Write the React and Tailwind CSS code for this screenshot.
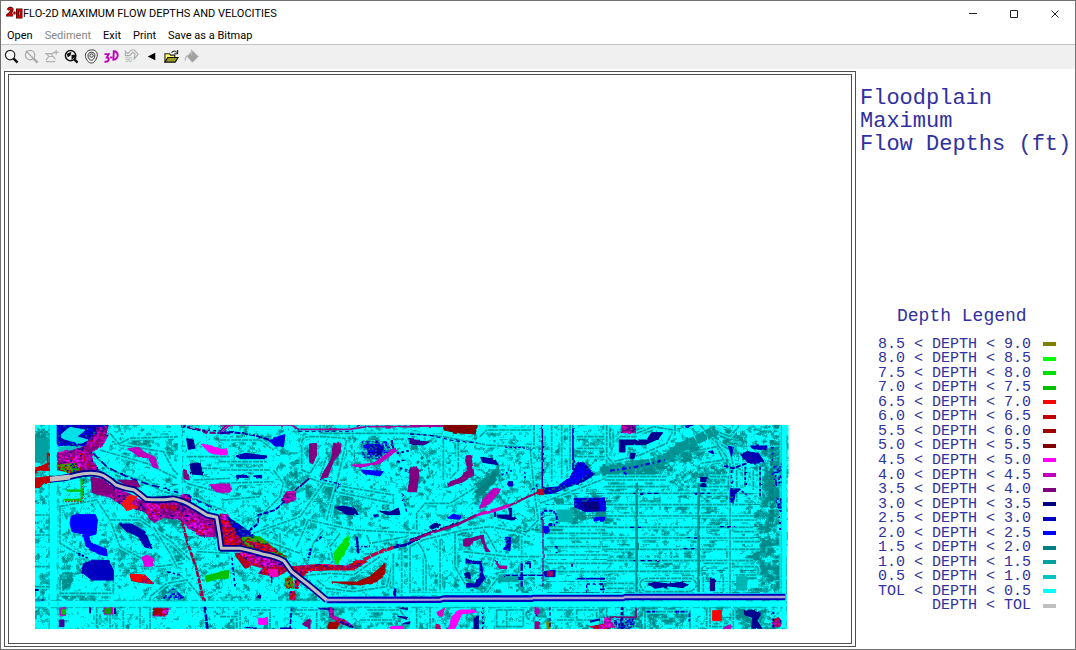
import { useMemo } from 'react'

const MENU = ['Open', 'Sediment', 'Exit', 'Print', 'Save as a Bitmap']

const LEGEND = [
  ['8.5 < DEPTH < 9.0', '#808000'],
  ['8.0 < DEPTH < 8.5', '#00ff00'],
  ['7.5 < DEPTH < 8.0', '#00e000'],
  ['7.0 < DEPTH < 7.5', '#00c000'],
  ['6.5 < DEPTH < 7.0', '#ff0000'],
  ['6.0 < DEPTH < 6.5', '#c00000'],
  ['5.5 < DEPTH < 6.0', '#a00000'],
  ['5.0 < DEPTH < 5.5', '#800000'],
  ['4.5 < DEPTH < 5.0', '#ff00ff'],
  ['4.0 < DEPTH < 4.5', '#c000c0'],
  ['3.5 < DEPTH < 4.0', '#800080'],
  ['3.0 < DEPTH < 3.5', '#000080'],
  ['2.5 < DEPTH < 3.0', '#0000c0'],
  ['2.0 < DEPTH < 2.5', '#0000ff'],
  ['1.5 < DEPTH < 2.0', '#008080'],
  ['1.0 < DEPTH < 1.5', '#00a0a0'],
  ['0.5 < DEPTH < 1.0', '#00c4c4'],
  ['TOL < DEPTH < 0.5', '#00ffff'],
  ['DEPTH < TOL', '#c0c0c0'],
]

// ---------- terrain noise ----------

function hash(x, y) {
  let h = (x * 374761393 + y * 668265263) | 0
  h = Math.imul(h ^ (h >>> 13), 1274126177)
  return ((h ^ (h >>> 16)) >>> 0) / 4294967296
}

function noise(x, y) {
  const xi = Math.floor(x)
  const yi = Math.floor(y)
  const u = (x - xi) * (x - xi) * (3 - 2 * (x - xi))
  const v = (y - yi) * (y - yi) * (3 - 2 * (y - yi))
  const top = hash(xi, yi) * (1 - u) + hash(xi + 1, yi) * u
  const bottom = hash(xi, yi + 1) * (1 - u) + hash(xi + 1, yi + 1) * u
  return top * (1 - v) + bottom * v
}

// x, y, rx, ry, extra depth (cells)
const WET = [
  [5, 22, 12, 18, 0.3], [30, 155, 8, 22, 0.3], [45, 172, 18, 6, 0.26],
  [140, 25, 12, 8, 0.15], [135, 170, 16, 12, 0.18], [260, 58, 16, 12, 0.18],
  [340, 25, 20, 16, 0.26], [300, 70, 22, 14, 0.14], [450, 60, 18, 20, 0.18],
  [540, 92, 12, 8, 0.28], [570, 92, 14, 8, 0.16], [600, 45, 42, 10, 0.3],
  [650, 28, 24, 12, 0.28], [690, 14, 22, 12, 0.26], [675, 48, 22, 10, 0.14],
  [738, 30, 14, 44, 0.24], [735, 90, 18, 44, 0.24], [730, 150, 28, 30, 0.22],
  [715, 190, 24, 14, 0.2], [620, 190, 34, 16, 0.16], [500, 190, 26, 12, 0.14],
  [80, 195, 24, 8, 0.16], [300, 30, 10, 16, 0.1], [445, 160, 14, 8, 0.18],
  [555, 22, 16, 20, 0.16], [620, 98, 110, 50, 0.05], [280, 78, 44, 30, 0.07],
  [60, 115, 40, 30, 0.05], [120, 120, 50, 40, 0.05],
]

const TEALS = ['#00cccc', '#00a8a8', '#008c8c']

function depthClass(x, y) {
  let v = 0.38 * noise(x / 7, y / 7) + 0.46 * noise(x / 2.8 + 90, y / 2.4) + 0.16 * hash(x + 7, y + 3)
  const ridge = Math.abs(noise(x / 13 + 40, y / 11) - 0.5)
  if (ridge < 0.03) v += 0.1
  WET.forEach(([cx, cy, rx, ry, d]) => {
    const k = ((x - cx) / rx) ** 2 + ((y - cy) / ry) ** 2
    if (k < 1) v += d * (1 - k * k)
  })
  // street grid of the eastern subdivision
  if (x > 510 && x < 725 && y > 60 && y < 172) {
    const row = y % 11
    if (row === 3) v += 0.18
    else if (row === 4 || row === 2 || row === 9) v -= 0.08
    else if (row === 6) v += 0.05
  }
  if (v > 0.76) return 2
  if (v > 0.66) return 1
  if (v > 0.56) return 0
  return -1
}

function buildTerrain() {
  const paths = ['', '', '']
  for (let y = 0; y < 206; y++) {
    let start = 0
    let current = depthClass(0, y)
    for (let x = 1; x <= 754; x++) {
      const next = x === 754 ? -2 : depthClass(x, y)
      if (next !== current) {
        if (current >= 0) paths[current] += `M${start} ${y}h${x - start}v1h${start - x}z`
        start = x
        current = next
      }
    }
  }
  return paths
}

// speckled fills, [base, ...[colour, share]]
const MIXES = {
  plum: ['#800080', ['#c000c0', 0.24], ['#e000c0', 0.06], ['#b00020', 0.06], ['#200090', 0.06]],
  rose: ['#c000c0', ['#800080', 0.24], ['#ff00ff', 0.16], ['#c00000', 0.16], ['#0000a0', 0.06]],
  brick: ['#b00018', ['#ff0000', 0.2], ['#900060', 0.18], ['#e000a0', 0.12], ['#200090', 0.08]],
  navy: ['#0000c0', ['#000090', 0.25], ['#0000ff', 0.2], ['#006090', 0.1]],
  shoal: ['#00a0a0', ['#0000c0', 0.3], ['#0000ff', 0.12], ['#00e8e8', 0.2]],
  moss: ['#00b000', ['#808000', 0.24], ['#c00000', 0.2], ['#0000c0', 0.1]],
}

function MixPattern({ id, mix, seed }) {
  const [base, ...rest] = mix
  const cells = []
  for (let y = 0; y < 24; y++) {
    for (let x = 0; x < 24; x++) {
      let r = hash(x * 3 + seed, y * 5 + seed * 7)
      for (const [color, share] of rest) {
        if (r < share) {
          cells.push(<rect key={`${x}-${y}`} x={x * 5} y={y * 5} width="6" height="5" fill={color} />)
          break
        }
        r -= share
      }
    }
  }
  return (
    <pattern id={id} width="120" height="120" patternUnits="userSpaceOnUse">
      <rect width="120" height="120" fill={base} />
      {cells}
    </pattern>
  )
}

// ---------- map features, four sheets from west to east ----------
// streets: [path]   fills: [path, colour]   lines: [path, colour, width, dash]

const SHEETS = [
  {
    streets: [
      'M200 60 L180 95 L240 150 L330 180 L400 215 L500 240 L590 275',
      'M240 40 L270 75 L400 95 L430 150 L470 190 L600 225',
      'M270 70 L300 55 L450 50', 'M210 90 L350 130 L440 175',
      'M85 260 L200 240 L240 300 L270 380 L380 440 L460 430',
      'M14 285 H60 M14 345 H60 M14 440 H60 M14 500 H60', 'M90 260 V370 L160 410',
      'M240 300 L330 300 L430 370 L480 420', 'M370 320 L420 400 L440 440', 'M90 480 V520 H250 V450',
      'M360 628 V530 L410 490 L470 480 L520 540', 'M500 395 L600 400', 'M200 560 V620 M240 560 V628 M280 570 V628 M330 560 V628',
      'M470 110 H600 M480 145 H600 M490 180 L600 175',
    ],
    fills: [
      ['M80 14 H235 L225 50 L195 55 L150 95 L120 75 L80 78Z', 'navy'],
      ['M95 42 L120 22 L165 30 L140 50 L175 60 L150 70 L95 55Z', '#00e0e8'],
      ['M88 82 L150 78 L170 92 L140 100 L85 98Z', '#00c4c4'],
      ['M82 98 L125 92 L165 80 L190 45 L235 45 L215 80 L185 95 L190 120 L205 150 L165 158 L120 150 L82 150Z', 'plum'],
      ['M100 105 L160 100 L175 140 L120 145Z', 'rose'],
      ['M200 25 L232 18 L222 70 L205 75Z', 'plum'],
      ['M80 135 L140 130 L150 158 L115 158 L84 148Z', 'moss'],
      ['M14 55 H56 V110 L40 130 L14 125Z', '#00a0a0'],
      ['M14 148 L52 130 V100 H58 V152 L30 150 L14 156Z', '#c00000'],
      ['M14 175 L60 169 L62 187 L42 188 L28 203 L14 203Z', '#c00000'],
      ['M183 172 L215 178 L255 205 L300 222 L345 248 L400 250 L450 245 L500 268 L560 300 L555 350 L510 348 L470 318 L452 300 L400 292 L372 308 L345 275 L280 258 L240 232 L187 218Z', 'plum'],
      ['M183 172 L215 178 L250 203 L240 225 L187 214Z', '#800080'],
      ['M265 180 L320 182 L330 200 L300 205Z', '#800080'],
      ['M275 250 L300 226 L322 230 L300 250 L325 262 L290 272Z', '#f01818'],
      ['M345 248 L380 252 L395 268 L390 300 L360 290Z', 'rose'],
      ['M470 285 L545 315 L548 346 L510 342 L478 318Z', 'rose'],
      ['M455 222 L480 225 L482 245 L450 240Z', 'rose'],
      ['M575 290 L600 295 V382 H582Z', 'brick'],
      ['M295 86 L325 82 L345 98 L375 112 L385 145 L370 142 L355 115 L320 105Z', '#c000c0'],
      ['M513 72 L545 78 L592 95 V105 L540 100Z', '#ff00ff'],
      ['M535 194 L600 192 V216 L560 216Z', '#c000c0'],
      ['M480 132 L510 128 L518 165 L485 162Z', '#000090'],
      ['M470 56 L490 60 L494 85 L475 88Z', '#000090'],
      ['M458 148 L472 152 L478 180 L462 176Z', '#800080'],
      ['M124 288 L140 284 H196 L202 300 L198 342 L176 348 L182 368 L228 388 L232 408 L205 402 L168 378 L160 342 L126 335 L120 310Z', '#0000ff'],
      ['M160 432 L185 420 L235 422 L250 450 V480 H185 L155 456Z', '#0000c0'],
      ['M268 312 L305 312 L345 335 L366 385 L345 382 L325 350 L285 330Z', '#0000b0'],
      ['M335 412 L352 405 L372 418 L368 438 L345 440Z', '#e000e0'],
      ['M300 464 L345 465 L372 492 L340 488 L305 482Z', 'brick'],
      ['M302 464 L332 464 L330 485 L306 480Z', '#ff0000'],
      ['M395 535 L430 505 L462 532 L440 540Z', 'shoal'],
      ['M525 468 L595 452 V475 L560 476 L530 486Z', '#00c000'],
      ['M370 564 H416 L410 588 H370Z', 'rose'], ['M370 566 H395 V584 H370Z', '#a00000'],
      ['M90 562 H107 V586 H90Z', '#c000c0'], ['M95 568 H107 V582 H95Z', '#00c000'],
      ['M222 562 H248 V582 H222Z', '#c000c0'], ['M228 566 H242 V580 H228Z', '#00a000'],
      ['M88 600 H102 V620 H88Z', '#4000a0'],
    ],
    lines: [
      ['M155 178 V240 H100 M155 212 H110', '#00c000', 7], ['M160 178 V245 H100', '#c00000', 3, '5 4'],
      ['M450 14 L490 25 L540 38 L600 40', '#800080', 7, '18 5'], ['M455 18 L500 30 L600 34', '#000090', 4, '9 7'],
      ['M190 100 L230 140 L290 170 L345 190 L470 225 L560 270', '#0000b0', 5, '22 12'],
      ['M465 255 L550 295', '#0000b0', 6, '20 8'],
      ['M570 40 L600 15', '#c000c0', 5], ['M455 300 L470 360 L500 450 L525 560', '#a00040', 8, '18 2'],
      ['M525 560 L532 628', '#0000a0', 8, '20 3'], ['M410 455 L450 465', '#0000a0', 5, '10 6'],
      ['M145 400 L175 415', '#0000a0', 6, '7 5'], ['M180 560 V580 M255 560 V582', '#0000a0', 6],
      ['M14 510 H26 M14 545 L40 540', '#0000a0', 6],
      ['M395 258 L440 264', '#c00000', 12, '8 3'],
    ],
  },
  {
    streets: [
      'M300 14 V40 H600', 'M245 70 Q245 50 270 50 H310 L375 55 L380 100 L350 170 M300 170 L320 110 M245 80 V150 L270 160 L300 110',
      'M0 60 L120 60 L160 90 M0 125 H140 M0 150 H150 M0 190 L160 185 M10 240 L120 230', 'M160 150 L190 190 L180 230 L110 300',
      'M270 175 L310 190 L520 225 V250 L345 215 L330 290', 'M380 60 L350 190 L320 300', 'M230 380 L265 300 L400 330 L600 340',
      'M310 190 L240 290 L100 340', 'M310 330 L280 370 L265 420', 'M360 340 L330 380 L340 420', 'M440 345 L450 370 L560 350',
      'M290 480 L320 505 L400 515 L500 500 L520 420', 'M270 465 L330 460 L400 465 L480 410', 'M570 360 V520 M545 390 V530 M520 400 V500',
      'M90 570 H150 V625 M60 570 V628 M0 590 H50 V628', 'M230 570 H290 V628', 'M440 570 H540 L560 600 M420 600 H520', 'M180 340 V400 M100 350 L240 400',
    ],
    fills: [
      ['M268 72 L290 70 V105 L278 132 L268 125Z', '#800080'],
      ['M340 70 L363 72 L360 98 L340 125 L322 172 L302 172 L335 115Z', '#800080'],
      ['M425 65 L500 65 L515 95 L480 118 L430 112Z', 'shoal'], ['M440 72 L490 75 L485 105 L445 100Z', 'navy'],
      ['M395 136 L460 130 L525 84 L530 92 L480 130 L420 142Z', '#c000c0'],
      ['M425 150 L490 155 L480 168 L430 160Z', '#0000ff'],
      ['M585 140 L598 150 L590 215 H563 L572 165Z', '#800080'], ['M565 58 L600 62 V75 L580 70Z', '#400090'],
      ['M145 60 L172 50 L195 44 L190 78 L165 78Z', '#0000e0'],
      ['M48 108 L75 100 L140 108 V116 L60 116Z', '#0000b0'],
      ['M50 166 L80 166 L85 172 H50Z M100 168 L125 166 V175Z', '#0000b0'],
      ['M0 90 L20 88 L22 96 L0 106Z', '#ff00ff'], ['M0 192 L20 195 L36 206 L28 216 H0Z', '#c000c0'],
      ['M183 240 L200 215 L225 215 L228 238 L200 250Z', 'plum'],
      ['M345 262 L370 258 L405 266 L415 284 L380 284Z', '#000090'], ['M480 274 L510 276 L535 264 L540 284 L500 284Z', '#000090'],
      ['M342 398 L385 346 L388 372 L352 434 L344 420Z', '#00e000'],
      ['M335 486 L410 486 L450 470 L495 430 V460 L470 485 L420 495 L380 492Z', '#a00000'],
      ['M0 290 L25 292 L50 320 L60 350 L80 380 L0 382Z', 'brick'], ['M0 282 L25 285 V300 L0 300Z', 'rose'],
      ['M20 290 L50 308 L80 330 L120 360 L80 370 L55 345Z', 'navy'], ['M62 352 L120 350 L170 390 L200 412 L150 400 L80 382Z', 'moss'],
      ['M75 362 L150 378 L170 395 L120 392Z', 'brick'],
      ['M45 400 L80 398 L140 410 L195 432 L205 450 L170 470 L115 460 L130 445 L80 430 L60 420Z', 'brick'],
      ['M60 400 L100 400 L180 425 L195 440 L150 438 L90 425Z', 'rose'],
      ['M45 405 L65 410 L92 440 L75 445Z', '#b00020'],
      ['M145 448 H172 V470 H150Z', '#f000c0'],
      ['M195 478 L215 465 L222 505 H200Z', 'moss'], ['M225 480 L238 482 L235 505 H225Z', 'brick'], ['M210 515 H225 V540 H210Z', 'brick'],
      ['M215 440 L300 433 L380 438 L420 420 L440 425 L400 450 L330 450 L265 452 L250 470 L225 460Z', 'brick'],
      ['M0 455 L25 452 V470 L0 478Z', '#00c000'],
      ['M116 595 H143 V613 H116Z', '#ff00ff'], ['M247 612 L270 596 V628Z', '#800080'],
      ['M325 562 L340 565 L342 590 L375 600 L400 620 L365 612 L330 590Z', 'plum'], ['M324 608 L360 605 L350 628 H324Z', '#a00000'],
      ['M512 620 H550 V628 H512Z', '#ff00ff'], ['M530 562 L562 562 V570Z M532 588 L560 592 V598Z M545 612 L570 605 V612Z', '#200090'],
      ['M110 532 L122 520 V535Z', '#200090'],
    ],
    lines: [
      ['M0 15 H215 L235 28 H390 L440 20 H600', '#a00090', 5], ['M0 40 L35 36 L100 45 L150 60', '#0000b0', 6, '18 4'],
      ['M0 30 L20 16', '#800080', 5], ['M235 34 H400', '#0000a0', 3, '12 8'], ['M410 20 L420 14', '#0000a0', 4],
      ['M268 175 L225 212', '#400080', 6], ['M195 245 L165 270 L115 285 L115 310 L85 335', '#0000b0', 6, '16 4'],
      ['M300 178 L360 192 L345 215', '#0000b0', 4, '8 6'], ['M515 60 L520 85', '#0000a0', 6],
      ['M430 420 L470 400 L520 382', '#c00040', 10, '24 2'], ['M520 382 L560 374 L600 352', '#0000a0', 8],
      ['M410 350 L415 400', '#0000b0', 7], ['M405 380 L450 380', '#0000b0', 4, '9 5'],
      ['M305 350 L285 365 M272 385 L265 415', '#0000b0', 6, '8 5'], ['M525 505 V530', '#0000b0', 7],
      ['M35 410 L45 500', '#0000b0', 5, '10 6'], ['M155 470 V490', '#0000a0', 4],
      ['M215 560 L210 628', '#0000a0', 5, '14 5'], ['M295 565 L330 568', '#0000b0', 6],
      ['M360 605 L400 622', '#000090', 6, '12 4'], ['M75 625 H110 M180 625 H215', '#0000b0', 5],
      ['M530 100 L575 90 M530 125 L560 120 M540 145 L560 150', '#0000a0', 6, '7 8'], ['M545 220 L560 275', '#0000b0', 4, '10 6'],
      ['M460 286 H475', '#0000b0', 6],
    ],
  },
  {
    streets: [
      'M0 40 L100 50 L230 75 L360 82 L372 210 L385 300 L335 350 V500', 'M210 50 L230 30 H365', 'M372 14 V80', 'M100 55 V180 M145 60 V150 L120 175 M60 170 L50 110',
      'M425 14 V185 M455 14 V175 M480 14 V150 M590 14 V130', 'M20 330 V280 L45 250 H120 L200 200', 'M0 380 L40 360 L160 330 L240 320 L320 335 L360 350',
      'M135 340 V440 L170 500 M90 360 V520 M40 380 V520', 'M0 390 V520 M25 370 Q48 400 48 430 V520', 'M230 340 L260 395 L245 440', 'M225 525 L270 465 H400',
      'M160 395 L300 410 H390', 'M410 320 H600 M410 340 H600 M410 355 H600 M410 380 H600 M410 405 H600 M410 430 H600 M410 455 H600', 'M390 250 L600 170',
      'M0 520 H210', 'M20 560 V628 M60 560 V628', 'M260 570 H340 V620 H260Z M290 570 V620', 'M440 570 H490 M440 600 H490', 'M500 570 H560 V600 H500Z',
      'M500 50 H580 M500 85 H580 M500 110 H590',
    ],
    fills: [
      ['M100 14 H202 L195 42 L140 38 L102 30Z', '#800000'],
      ['M0 145 L20 140 L22 190 L15 215 H0Z', '#800080'], ['M0 62 L58 66 L40 75 L0 70Z', '#300090'],
      ['M168 108 L182 106 L192 165 L160 185 L115 200 L113 188 L150 175 L172 150Z', '#800080'],
      ['M212 112 L255 118 L264 134 L218 127Z', '#0000a0'],
      ['M255 148 L258 180 L220 220 L195 218 L240 170Z', '#008080'],
      ['M250 205 L272 208 L240 250 L208 266 L218 240Z', '#c000c0'],
      ['M112 294 L130 282 L152 290 V298Z', '#0000ff'], ['M58 320 L80 306 L92 315 L65 328Z', '#000090'],
      ['M262 285 L300 285 L296 265 H305 V292 L322 298 L305 300 L262 292Z', '#000090'],
      ['M295 185 H308 V198 H295Z', '#0000c0'],
      ['M160 360 L180 355 L220 345 L225 375 L240 395 L228 395 L212 355 L190 362 L182 378 H160Z', '#800080'],
      ['M282 352 H302 L300 392 L280 388 L290 370Z', 'navy'],
      ['M168 416 L185 424 H215 L218 460 L225 475 L205 500 L170 502 V490 L195 492 L210 470 V432 L168 428Z', '#0000b0'],
      ['M163 460 L178 458 L182 472 L168 474Z', '#000090'],
      ['M250 418 L270 438 L290 438 V446 L268 445Z', '#a00090'],
      ['M382 208 H402 V224 H385Z', '#c00020'],
      ['M400 205 L450 200 L485 165 L500 130 L520 126 L540 150 L555 162 L520 185 L480 198 L430 220 L405 222Z', 'navy'],
      ['M448 195 L485 168 L505 135 L520 142 L535 160 L500 188Z', '#0000f0'],
      ['M492 235 L585 234 V272 L530 275 L495 262Z', 'navy'], ['M515 248 L585 245 V270 L530 270Z', '#000080'],
      ['M552 292 H584 V303 H552Z', '#0000ff'], ['M398 320 L415 320 L418 336 L402 338Z', '#0000f0'],
      ['M440 270 H488 V305 H445Z', '#00b0b0'], ['M432 235 L460 238 V252 L440 252Z', '#009090'],
      ['M402 455 L435 450 V470 L405 470Z', 'navy'], ['M412 455 H428 V468 H412Z', '#a00060'],
      ['M265 470 H325 V485 H265Z', '#00a0a0'],
      ['M118 620 L125 590 L150 570 L190 570 L200 576 L155 582 L135 625 L115 628Z', '#ff00ff'],
      ['M80 578 L104 564 L95 592Z', '#e000c0'], ['M78 612 L90 616 V628 H78Z', '#c00060'],
      ['M192 595 L205 590 V628 H192Z', '#000090'],
      ['M375 558 H386 V582 H375Z', '#b000b0'], ['M375 606 H386 V628 H375Z', '#900080'], ['M410 606 H420 V628 H412Z', '#808000'],
      ['M590 595 L600 592 V628 H560 L540 620 L585 612Z', 'brick'],
      ['M470 572 H485 V585 H470Z', '#00a0a0'],
    ],
    lines: [
      ['M0 18 H100', '#a00090', 6], ['M0 42 L60 46 L130 62 L200 68', '#0000b0', 4, '12 8'],
      ['M397 14 V205', '#300090', 5], ['M489 25 V150', '#0000c0', 5], ['M399 290 V500', '#800080', 4, '30 3'],
      ['M0 362 L65 338 L145 312 L200 285', '#900070', 9], ['M200 285 L262 268 L300 256', '#d000c0', 10], ['M300 256 L350 232 L390 214', '#900060', 6],
      ['M0 358 L65 334 L145 308', '#000090', 3, '12 6'], ['M285 82 H330 L365 90', '#0000c0', 4, '8 5'],
      ['M275 165 L310 150 M345 155 V180 M370 210 L385 190', '#0000b0', 5, '6 8'], ['M395 275 V300 M400 272 H425 L440 285 V310 M415 315 H435', '#0000c0', 6, '12 4'],
      ['M300 330 L350 335 L385 320', '#008080', 4, '9 4'], ['M335 430 V500', '#0000b0', 7, '22 5'], ['M345 430 H360 V445', '#0000b0', 6],
      ['M280 466 H400', '#0000b0', 4, '20 5'], ['M325 475 H340', '#0000c0', 10], ['M497 476 H585', '#0000c0', 5],
      ['M530 492 H580 V520 H530Z', '#0000b0', 4, '10 8'], ['M440 378 V400', '#0000a0', 6, '8 10'], ['M486 432 V440', '#0000a0', 6],
      ['M218 560 V628', '#0000a0', 4, '8 7'], ['M378 584 L390 600 M420 560 V628', '#000090', 4, '10 7'],
      ['M540 605 L570 598', '#0000a0', 6], ['M255 290 V275', '#000090', 5],
      ['M20 130 L45 105 M30 155 L60 120 M40 190 L70 150', '#008080', 8, '10 8'], ['M210 195 L240 165', '#008c8c', 12],
    ],
  },
  {
    streets: [
      'M20 14 V110 L40 130 M40 40 V80 M60 50 H110', 'M110 40 L160 20 L220 30 L200 70 L120 105 L40 125', 'M225 14 L225 45 M300 14 L340 60 L390 90 L400 140 L450 160',
      'M340 30 L390 50 L420 14', 'M350 70 L380 110 M300 90 L350 80 L370 120 L300 130', 'M20 170 H200 M110 190 V520 M296 190 V520', 'M14 180 H200 M14 200 H200',
      'M20 220 H440 M20 254 H440 M20 288 H460 M20 322 H460 M20 354 H460 M20 388 H480 M20 422 H460 M20 454 H290', 'M390 130 V520', 'M400 300 H470 M400 335 H470 M400 365 H480',
      'M400 440 H470 Q482 450 470 465 H400', 'M120 490 Q125 475 145 475 H270 Q288 480 290 495 Q285 512 265 515 H140 Q122 512 120 490', 'M410 150 V250 M435 150 V200 M460 150 V210 M480 140 V230',
      'M305 200 H390 M330 170 H385 V210', 'M310 430 H380 M310 470 V515 M370 470 V515', 'M20 490 H100 M20 505 H100',
      'M135 575 H270 V628 M135 575 V628', 'M20 560 V590 H100 M70 560 V590', 'M320 570 V620 M400 570 V628 M420 560 H490', 'M545 14 V520', 'M330 560 V620 H400',
    ],
    fills: [
      ['M66 14 H106 V38 H66Z', 'plum'], ['M58 60 L140 60 L155 38 L188 38 L175 56 L135 74 L75 74 V96 H58Z', '#000090'],
      ['M92 100 H106 L102 116 H90Z', '#000090'],
      ['M422 105 L440 95 L475 100 L495 128 L445 130 L430 112Z', '#0000b0'], ['M452 78 H498 V92 L455 84Z', '#0000c0'],
      ['M325 95 L338 92 L342 102Z M385 78 L400 82 L395 110Z', '#0000c0'],
      ['M302 172 H318 V185 H302Z M302 190 H318 V200 H302Z', '#000090'],
      ['M0 235 L16 234 V272 L0 272Z M0 292 H14 V303 H0Z', '#0000f0'],
      ['M392 205 L415 208 L405 225 L400 250 L390 245Z', 'navy'],
      ['M514 140 H542 V195 H520Z', 'shoal'], ['M528 235 H545 V265 H530Z', 'shoal'],
      ['M145 492 L165 487 L205 492 L245 487 L262 494 L250 503 L205 498 L165 505Z', '#0000a0'],
      ['M331 477 H344 V512 H331Z', '#000090'], ['M334 485 H341 V505 H334Z', '#300070'],
      ['M338 572 H364 V602 H338Z', '#ff0000'], ['M432 575 L455 570 L480 576 V590 L470 600 L485 625 L455 625 L458 592 L435 585Z', '#000090'],
      ['M14 592 L30 598 L45 622 L0 628 V615 L14 615Z', 'rose'], ['M45 600 L105 595 L100 625 H50Z', 'shoal'],
      ['M520 600 L535 592 L546 605 L540 620 H520Z', 'rose'], ['M370 625 L392 614 V628 H365Z', '#c000c0'],
      ['M410 470 H440 V510 H410Z', '#00b4b4'], ['M444 480 H474 V502 H444Z', '#00ffff'],
    ],
    lines: [
      ['M30 150 L100 140 L200 118', '#009494', 26, '26 3 14 5'], ['M195 115 L245 80 L285 62 L350 28', '#009494', 28, '30 4 18 3'],
      ['M30 152 L100 142 L195 120', '#0000e0', 6, '14 8 5 9'], ['M70 140 L80 168', '#0000e0', 6, '10 6'],
      ['M372 138 L400 145 L440 130', '#0000b0', 6, '14 5'], ['M395 150 V200 M436 140 V195 M480 140 V230', '#0000a0', 5, '9 7'],
      ['M415 205 L440 225', '#0000b0', 5, '8 5'], ['M110 340 V420', '#0000a0', 5, '8 22'], ['M100 220 H180 M280 220 H330 M90 322 H130 M360 320 H405', '#0000a0', 4, '12 9'],
      ['M100 422 H190 M260 354 H300 M250 386 H290', '#0000a0', 4, '12 10'],
      ['M515 60 V300', '#008080', 12, '14 7'], ['M517 80 V130 M540 270 V340 M545 130 V200', '#0000c0', 6, '6 12'],
      ['M0 476 H14 M0 492 H12 M0 508 H14', '#0000a0', 5], ['M20 592 H108 V560', '#800080', 5], ['M66 560 V628', '#000090', 8, '10 6'],
      ['M140 575 H170 M225 575 H260 M268 580 V605', '#0000c0', 5, '12 5'], ['M520 555 V628', '#000090', 6, '8 12'],
      ['M255 20 L280 15', '#0000c0', 5], ['M110 190 V515 M296 190 V515', '#009090', 8],
    ],
  },
]

const paint = (fill) => (MIXES[fill] ? `url(#mix-${fill})` : fill)

function Streets({ sheet, offset }) {
  return (
    <g transform={`translate(${offset} 0)`} fill="none">
      {sheet.streets.map((d) => (
        <g key={d}>
          <path d={d} stroke="#00ffff" strokeWidth="13" strokeOpacity="0.8" />
          <path d={d} stroke="#009c9c" strokeWidth="5" strokeDasharray="19 2 9 3" />
        </g>
      ))}
    </g>
  )
}

function Features({ sheet, offset }) {
  return (
    <g transform={`translate(${offset} 0)`} strokeLinejoin="round">
      {sheet.fills.map(([d, fill]) => (
        <path key={d} d={d} fill={paint(fill)} stroke={paint(fill)} strokeWidth="3" />
      ))}
      {sheet.lines.map(([d, stroke, width, dash]) => (
        <path key={d} d={d} fill="none" stroke={stroke} strokeWidth={width} strokeDasharray={dash} />
      ))}
    </g>
  )
}

const CHANNEL = 'M60 178 Q100 176 120 170 T160 161 Q200 156 222 168 Q245 182 258 195 Q285 206 312 209 Q330 222 348 238 Q390 242 430 236 Q460 242 482 256 Q510 272 530 285 L560 292 L568 340 L574 385 L630 385 Q680 396 700 403 Q740 410 762 423 L785 455 L840 498 L890 540'
const CANAL = 'M890 540 L1230 539 L1240 536 H1505 L1510 534 H1780 L1785 531 H2266'

function FloodMap() {
  const terrain = useMemo(buildTerrain, [])
  return (
    <svg viewBox="15 12 2262 618" className="w-[754px] max-w-full" role="img" aria-label="Floodplain">
      <defs>
        {Object.entries(MIXES).map(([name, mix], i) => (
          <MixPattern key={name} id={`mix-${name}`} mix={mix} seed={i * 31 + 5} />
        ))}
        <clipPath id="domain">
          <path d="M15 14 H2276 V170 H2273 V380 H2271 V628 H15Z" />
        </clipPath>
        {/* ragged shorelines */}
        <filter id="shore" x="0" y="0" width="2290" height="640" filterUnits="userSpaceOnUse">
          <feTurbulence type="fractalNoise" baseFrequency="0.06" numOctaves="1" seed="4" />
          <feDisplacementMap in="SourceGraphic" scale="8" xChannelSelector="R" yChannelSelector="G" />
        </filter>
      </defs>
      <g clipPath="url(#domain)">
        <path d="M15 12 H2277 V630 H15Z" fill="#00ffff" />
        <g transform="translate(15 12) scale(3)" shapeRendering="crispEdges">
          {terrain.map((d, i) => (
            <path key={TEALS[i]} d={d} fill={TEALS[i]} />
          ))}
        </g>
        {SHEETS.map((sheet, i) => (
          <Streets key={i} sheet={sheet} offset={i * 570} />
        ))}
        <g filter="url(#shore)">
          {SHEETS.map((sheet, i) => (
            <Features key={i} sheet={sheet} offset={i * 570} />
          ))}
        </g>

        {/* arterial roads */}
        <g fill="none" stroke="#00ffff">
          <path d="M70 14 V165 M70 192 V628" strokeWidth="20" />
          <path d="M15 552 H2260" strokeWidth="16" />
          <path d="M448 14 L450 225" strokeWidth="10" />
          <path d="M1140 522 H2260" strokeWidth="6" />
          <path d="M2262 14 V620" strokeWidth="14" />
        </g>
        <g fill="none" stroke="#00b4b4" strokeWidth="3" strokeDasharray="20 6 9 12">
          <path d="M57 14 V165 M57 192 V628 M84 192 V628" />
          <path d="M15 541 H870 M15 563 H2260" />
          <path d="M458 14 V220" />
        </g>

        {/* main channel */}
        <g fill="none" strokeLinejoin="round">
          <path d={CHANNEL} stroke="#000090" strokeWidth="20" />
          <path d={CANAL} stroke="#0000b8" strokeWidth="20" />
          <path d="M60 178 L120 171" stroke="#c0c0c0" strokeWidth="15" />
          <path d={CHANNEL} stroke="#c0c0c0" strokeWidth="9" />
          <path d={CANAL} stroke="#a8a8d0" strokeWidth="7" />
        </g>
      </g>
    </svg>
  )
}

// ---------- toolbar ----------

const ICONS = [
  {
    name: 'Zoom',
    art: (
      <>
        <circle cx="6.500" cy="6.500" r="5" fill="#f8f8f8" stroke="#222" strokeWidth="1.3" />
        <path d="M10 10 L14.500 14.500" stroke="#111" strokeWidth="2.600" />
      </>
    ),
  },
  {
    name: 'Cancel zoom',
    disabled: true,
    art: (
      <g fill="none" stroke="#aaa">
        <circle cx="6.500" cy="6.500" r="5" strokeWidth="1.3" />
        <path d="M10 10 L14.500 14.500" strokeWidth="2.500" />
        <path d="M2 2 L13 13" strokeWidth="1.500" />
      </g>
    ),
  },
  {
    name: 'Pan',
    disabled: true,
    art: (
      <g fill="none" stroke="#b0b0b0" strokeWidth="1.3">
        <path d="M1 5 H9 L12 3 M3 5 L5 8 L2 12 M2 13.500 H12 M5 8 H10 L12 11 M8 5 L9 8" />
        <path d="M13 1 V6 M10.500 3.500 H15.500" />
      </g>
    ),
  },
  {
    name: 'Zoom previous',
    art: (
      <>
        <circle cx="7" cy="7" r="5.500" fill="#fff" stroke="#111" strokeWidth="1.6" />
        <path d="M3 5 L8 3 L7 7 L4 9Z M8 6 H13 V11 L11 9 L8 12Z" fill="#111" />
        <path d="M10.500 10.500 L14.500 14.500" stroke="#111" strokeWidth="2.600" />
      </>
    ),
  },
  {
    name: 'Contours',
    art: (
      <g fill="none" stroke="#333">
        <path d="M8 1 C12.500 0.500 15 4 14 8 C13 12 10.500 15 8 15 C5 15 2.500 12 1.500 8 C1 4 4 1 8 1Z" />
        <path d="M8 3.500 C10.500 3.500 12 5 11.500 7.500 C11 10.500 9.500 12 8 12 C6 12 4.500 10 4.300 7.500 C4 5 5.500 3.500 8 3.500Z" />
        <circle cx="8" cy="7" r="1.8" />
      </g>
    ),
  },
  {
    name: '3-D view',
    art: (
      <g fill="none" stroke="#c000c0" strokeWidth="2">
        <path d="M0.500 5.500 H5 L3 9 C6.500 9 5.500 14.500 0.500 13.500" />
        <path d="M6.500 9 H9" />
        <path d="M10.500 1.500 L10 11.500 C16 11 16.500 1.500 9.500 2.500" />
      </g>
    ),
  },
  {
    name: 'Rotate 90',
    disabled: true,
    art: (
      <>
        <path d="M1.500 7 V2.500 L4 5 L8 1 H11 L15 5.500 L11 10.500 V7.500 L12 5.500 L9.500 3.500 L6 7Z" fill="none" stroke="#aaa" strokeWidth="1.2" />
        <text x="1" y="14" fill="#aaa" fontSize="7" fontFamily="Liberation Sans, sans-serif">90</text>
      </>
    ),
  },
  { name: 'Back', art: <path d="M4 8 L12 4 V12Z" fill="#000" /> },
  {
    name: 'Open file',
    art: (
      <>
        <path d="M1 14 V5 H6 L7 6.500 H11.500 V9" fill="#ffff70" stroke="#222" strokeWidth="1.2" />
        <path d="M1 14 L4 9 H15 L12 14Z" fill="#9a9a20" stroke="#111" strokeWidth="1.2" />
        <path d="M8 4 Q11 0.500 13.500 3.500 M14.500 1 V5 H11" fill="none" stroke="#222" strokeWidth="1.2" />
      </>
    ),
  },
  {
    name: 'Fill',
    disabled: true,
    art: (
      <>
        <path d="M3.500 8 L9 2 L15 8 L9 14Z" fill="#a0a0a0" stroke="#aaa" />
        <path d="M8 0.500 V7 M4 7 Q1 8 1.500 12.500" fill="none" stroke="#bbb" strokeWidth="1.500" />
      </>
    ),
  },
]

function TitleBar() {
  return (
    <header className="flex h-[26px] items-center pl-[5px]">
      <svg viewBox="0 0 17 16" className="h-4 w-[17px]" aria-hidden="true">
        <g fill="none" stroke="#400000" strokeWidth="3">
          <path d="M2 4 Q4 1 6 3 Q6.500 5.500 2 9 H7 M7.500 7 H9.500 M11.500 4 H15 V11 H11.500Z" />
        </g>
        <g fill="none" stroke="#e00000" strokeWidth="1.500">
          <path d="M2 4 Q4 1 6 3 Q6.500 5.500 2 9 H7 M7.500 7 H9.500 M11.500 4 H15 V11 H11.500Z" />
        </g>
      </svg>
      <h1 className="flex-1 text-[11px] whitespace-nowrap">FLO-2D MAXIMUM FLOW DEPTHS AND VELOCITIES</h1>
      <div className="flex h-full">
        <button aria-label="Minimize" className="flex w-10 items-center justify-center">
          <svg viewBox="0 0 10 10" className="h-[10px] w-[10px]" stroke="#222"><path d="M1 4.500 H9" /></svg>
        </button>
        <button aria-label="Maximize" className="flex w-[41px] items-center justify-center">
          <svg viewBox="0 0 10 10" className="h-[10px] w-[10px]" fill="none" stroke="#222"><path d="M1.500 1.500 H8.500 V8.500 H1.500Z" /></svg>
        </button>
        <button aria-label="Close" className="flex w-[41px] items-center justify-center">
          <svg viewBox="0 0 10 10" className="h-[10px] w-[10px]" stroke="#222"><path d="M1.500 1.500 L8.500 8.500 M8.500 1.500 L1.500 8.500" /></svg>
        </button>
      </div>
    </header>
  )
}

export default function App() {
  return (
    <div className="flex min-h-screen flex-col border border-[#707070] bg-white font-[Roboto,'Open_Sans',sans-serif] text-black">
      <TitleBar />

      <nav className="flex h-[18px] items-center gap-3 border-b border-[#c4c4c4] pl-[6px] text-[11px] leading-4">
        {MENU.map((item) => (
          <button key={item} disabled={item === 'Sediment'} className="whitespace-nowrap disabled:text-[#858585]">
            {item}
          </button>
        ))}
      </nav>

      <div className="flex h-6 items-start bg-[#f0f0f0]">
        {ICONS.map((icon) => (
          <button key={icon.name} aria-label={icon.name} disabled={icon.disabled} className="flex h-[22px] w-5 items-center justify-center">
            <svg viewBox="0 0 16 16" className="h-[15px] w-[15px]">{icon.art}</svg>
          </button>
        ))}
      </div>

      <main className="flex flex-1 pt-[2px] pb-[2px] pl-[3px]">
        {/* drawing area */}
        <section className="flex flex-1 border border-[#505050] pt-[2px] pr-[3px] pb-[2px] pl-[3px]">
          <div className="flex flex-1 flex-col justify-end border border-[#505050] pb-[13px] pl-[26px]">
            <FloodMap />
          </div>
        </section>

        <aside className="w-[219px] shrink-0 pt-4 pl-1 font-['Liberation_Mono',monospace] text-[#3030a0]">
          <h2 className="text-[22px] leading-[23px] whitespace-nowrap">
            Floodplain<br />Maximum<br />Flow Depths (ft)
          </h2>
          <h3 className="mt-[148px] pl-[37px] text-lg leading-6">Depth Legend</h3>
          <ul className="mt-[9px] grid h-[276px] auto-rows-fr pr-[19px] text-[15px]">
            {LEGEND.map(([label, color]) => (
              <li key={label} className="flex items-center justify-end gap-3 leading-none whitespace-nowrap">
                {label}
                <span className="h-1 w-[13px]" style={{ backgroundColor: color }} />
              </li>
            ))}
          </ul>
        </aside>
      </main>
    </div>
  )
}
